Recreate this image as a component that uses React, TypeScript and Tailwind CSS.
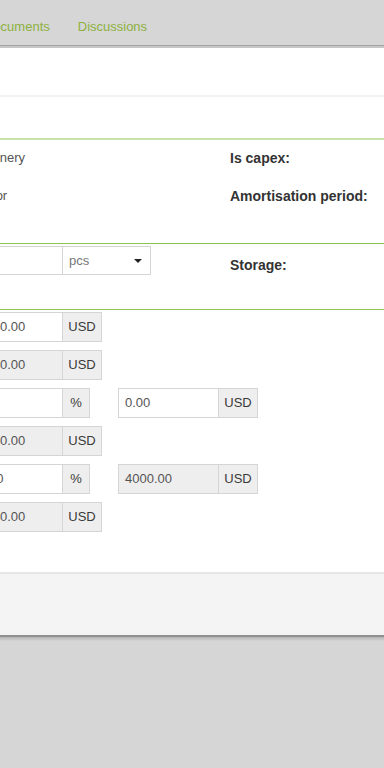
import React from 'react'
import { clsx } from 'clsx'

// ── InputGroup ────────────────────────────────────────────────────────────
function InputGroup({ value, addon, disabled, first }: {
  value: string; addon: string; disabled?: boolean; first?: boolean
}) {
  const percent = addon === '%'
  return (
    <div className={clsx(
      'flex h-[30px]',
      first ? (percent ? '-ml-[18px]' : '-ml-[36px]') : 'ml-[28px]'
    )}>
      <div className={clsx(
        'flex items-center border border-[#d5d5d5] pl-[6px] text-[13px] text-[#555] whitespace-nowrap overflow-hidden',
        first ? (percent ? 'w-[81px]' : 'w-[99px]') : 'w-[101px]',
        disabled ? 'bg-[#eeeeee]' : 'bg-white'
      )}>
        {value}
      </div>
      <div className={clsx(
        'flex items-center justify-center border border-l-0 border-[#d5d5d5] bg-[#eeeeee] text-[13px] text-[#3a3a3a]',
        percent ? 'w-[27px]' : 'w-[39px]'
      )}>
        {addon}
      </div>
    </div>
  )
}

// ── Caret ─────────────────────────────────────────────────────────────────
function Caret() {
  return (
    <svg width="8" height="4" viewBox="0 0 8 4" className="mr-[8px]">
      <polygon points="0,0 8,0 4,4" fill="#222" />
    </svg>
  )
}

export default function App() {
  return (
    <div className="min-h-[768px] w-[384px] overflow-hidden bg-[#d6d6d6] font-['Liberation_Sans',Arial,sans-serif]">
      {/* tabs behind the dialog */}
      <div className="flex h-[45px] items-center gap-[28px] pt-[9px] text-[13px] text-[#8db13c] whitespace-nowrap">
        <span className="-ml-[16px]">Documents</span>
        <span>Discussions</span>
      </div>
      <div className="h-px bg-[#a3a3a3]" />
      <div className="h-[2px] bg-[#c6c6c6]" />

      {/* dialog */}
      <div className="bg-white">
        <div className="h-[47px]" />
        <div className="h-[2px] bg-[#f3f3f3]" />
        <div className="h-[41px]" />
        <div className="h-[2px] bg-[#c8e2a8]" />

        <div className="h-[103px] pt-[8px] text-[13px] text-[#555]">
          <div className="flex h-[20px] items-center">
            <div className="flex w-[230px] shrink-0 whitespace-nowrap">
              <span className="-ml-[35px]">Machinery</span>
            </div>
            <span className="text-[14px] font-bold text-[#333]">Is capex:</span>
          </div>
          <div className="mt-[18px] flex h-[20px] items-center">
            <div className="flex w-[230px] shrink-0 whitespace-nowrap">
              <span className="-ml-[34px]">Vendor</span>
            </div>
            <span className="text-[14px] font-bold text-[#333] whitespace-nowrap">Amortisation period:</span>
          </div>
        </div>
        <div className="h-px bg-[#8fc455]" />

        <div className="flex h-[65px] pt-[2px]">
          <div className="flex w-[230px] shrink-0">
            <div className="-ml-[18px] h-[29px] w-[81px] border border-[#d5d5d5]" />
            <div className="flex h-[29px] w-[88px] items-center justify-between border border-l-0 border-[#d5d5d5] pl-[6px] text-[13px] text-[#777]">
              pcs
              <Caret />
            </div>
          </div>
          <span className="pt-[9px] text-[14px] font-bold text-[#333]">Storage:</span>
        </div>
        <div className="h-px bg-[#8fc455]" />

        <div className="flex flex-col gap-[8px] pt-[2px] pb-[40px]">
          <InputGroup first value="20000.00" addon="USD" />
          <InputGroup first value="20000.00" addon="USD" disabled />
          <div className="flex">
            <InputGroup first value="" addon="%" />
            <InputGroup value="0.00" addon="USD" />
          </div>
          <InputGroup first value="20000.00" addon="USD" disabled />
          <div className="flex">
            <InputGroup first value="20" addon="%" />
            <InputGroup value="4000.00" addon="USD" disabled />
          </div>
          <InputGroup first value="24000.00" addon="USD" disabled />
        </div>

        <div className="h-[2px] bg-[#e6e6e6]" />
        <div className="h-[61px] bg-[#f4f4f4]" />
      </div>
      <div className="h-[2px] bg-[#8f8f8f]" />
      <div className="h-[4px] bg-gradient-to-b from-[#b4b4b4] to-[#d6d6d6]" />
    </div>
  )
}
